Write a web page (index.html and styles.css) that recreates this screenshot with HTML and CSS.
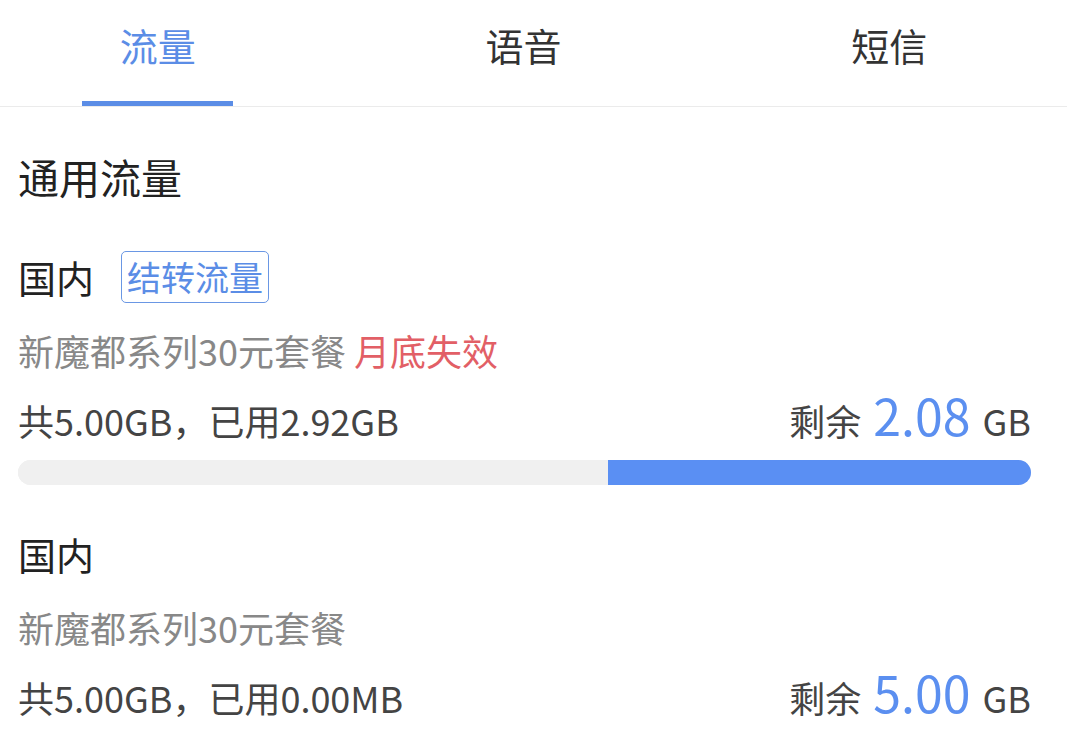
FILE: index.html
```html
<!DOCTYPE html>
<html lang="zh-CN">
<head>
<meta charset="utf-8">
<title>流量</title>
<link rel="stylesheet" href="styles.css">
</head>
<body>
<nav class="tabs">
  <div class="tab active"><span class="tab-label">流量</span></div>
  <div class="tab"><span class="tab-label">语音</span></div>
  <div class="tab"><span class="tab-label">短信</span></div>
</nav>
<main class="content">
  <h2 class="section-title">通用流量</h2>
  <section class="pkg">
    <div class="pkg-head"><span class="region">国内</span><span class="tag">结转流量</span></div>
    <div class="pkg-name">新魔都系列30元套餐 <span class="expire">月底失效</span></div>
    <div class="pkg-usage">
      <span class="used">共5.00GB，已用2.92GB</span>
      <span class="remain">剩余 <span class="num">2.08</span> GB</span>
    </div>
    <div class="bar"><div class="bar-used" style="width:58.2%"></div><div class="bar-left"></div></div>
  </section>
  <section class="pkg">
    <div class="pkg-head"><span class="region">国内</span></div>
    <div class="pkg-name">新魔都系列30元套餐</div>
    <div class="pkg-usage">
      <span class="used">共5.00GB，已用0.00MB</span>
      <span class="remain">剩余 <span class="num">5.00</span> GB</span>
    </div>
    <div class="bar"><div class="bar-used" style="width:0%"></div><div class="bar-left"></div></div>
  </section>
</main>
</body>
</html>
```
FILE: styles.css
```css
* { box-sizing: border-box; }
html, body { margin: 0; padding: 0; background: #fff; }
body {
  font-family: "Noto Sans CJK SC", "Noto Sans", sans-serif;
  color: #333;
  overflow: hidden;
  height: 734px;
}
.tabs {
  display: grid;
  grid-template-columns: repeat(3, 1fr);
  margin: 0 -5px 0 -25px;
  border-bottom: 1px solid #ebebeb;
}
.tab {
  height: 106px;
  display: flex;
  flex-direction: column;
  align-items: center;
  justify-content: space-between;
  padding-top: 26px;
}
.tab-label {
  font-size: 38px;
  line-height: 38px;
  color: #333;
}
.tab::after {
  content: "";
  width: 151px;
  height: 5px;
  background: transparent;
}
.tab.active .tab-label { color: #5b8de6; }
.tab.active::after { background: #5b8de6; }

.content { padding: 0 36px 0 18px; }
.section-title {
  margin: 49px 0 0;
  font-size: 41px;
  line-height: 41px;
  font-weight: 400;
  color: #222;
}
.pkg { margin-top: 42px; }
.section-title + .pkg { margin-top: 53px; }
.pkg-head {
  display: flex;
  align-items: center;
  gap: 27px;
  min-height: 53px;
}
.region { font-size: 38px; line-height: 38px; color: #222; }
.tag {
  font-size: 34px;
  line-height: 34px;
  padding: 8px 5px;
  border: 1.5px solid #6a97e4;
  border-radius: 5px;
  color: #5b8de6;
}
.pkg-name {
  margin-top: 29px;
  font-size: 36px;
  line-height: 36px;
  color: #888;
}
.expire { color: #e25f66; }
.pkg-usage {
  margin-top: 26px;
  display: flex;
  justify-content: space-between;
  align-items: baseline;
}
.used { font-size: 36px; line-height: 40px; color: #444; }
.remain { font-size: 36px; line-height: 40px; color: #444; }
.num { font-size: 50px; color: #5b8ff0; margin: 0 4px; }
.bar {
  margin-top: 20px;
  height: 25px;
  border-radius: 13px;
  overflow: hidden;
  display: flex;
  background: #f0f0f0;
}
.bar-used { background: #f0f0f0; }
.bar-left { flex: 1; background: #5a8ff3; }
```
